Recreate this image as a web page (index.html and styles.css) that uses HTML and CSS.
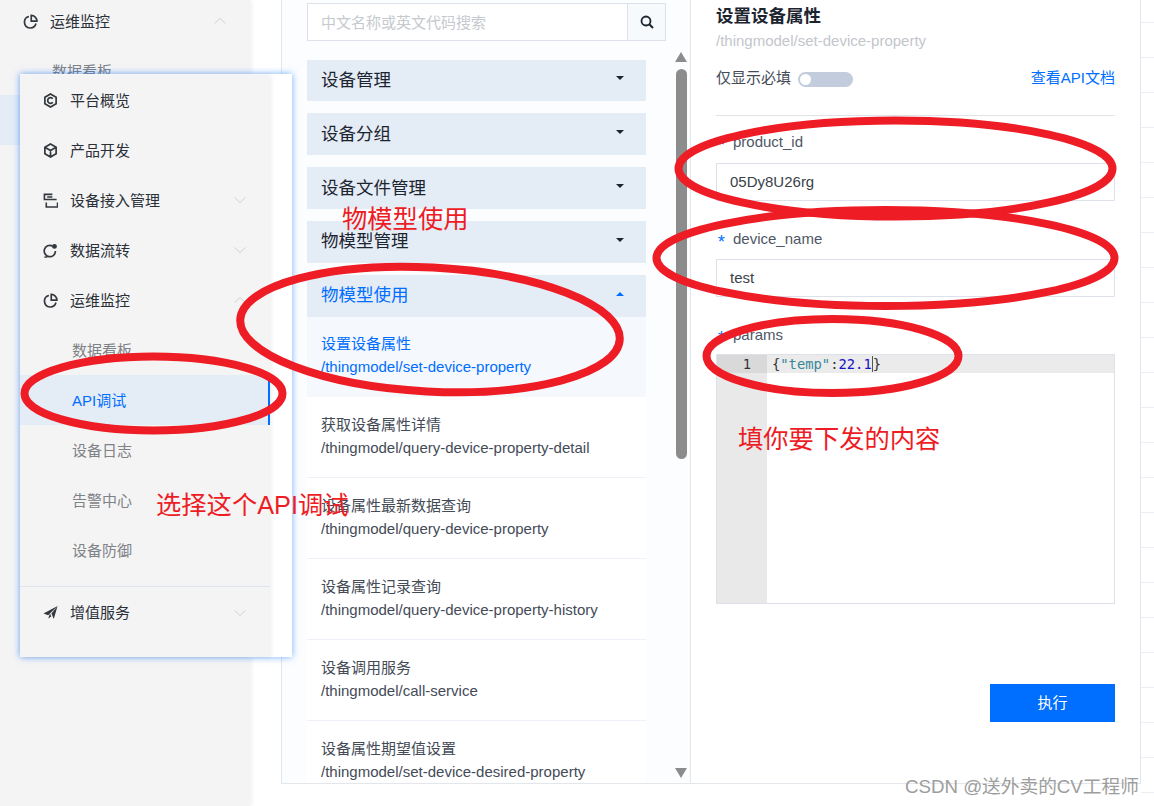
FILE: index.html
```html
<!DOCTYPE html>
<html lang="zh-CN">
<head>
    <meta charset="UTF-8">
    <meta name="viewport" content="width=device-width, initial-scale=1.0">
    <title>设置设备属性</title>
    <link rel="stylesheet" href="styles.css">
</head>
<body>
    <svg width="0" height="0" class="defs">
        <symbol id="i-overview" viewBox="0 0 16 16"><path d="M8 1l6 3.500v7L8 15l-6-3.500v-7z" fill="none" stroke="currentColor" stroke-width="1.800"/><path d="M10.400 6.200A3 3 0 1 0 10.400 9.800" fill="none" stroke="currentColor" stroke-width="1.800"/></symbol>
        <symbol id="i-product" viewBox="0 0 16 16"><path d="M8 1l6 3.500v7L8 15l-6-3.500v-7zM2 4.500L8 8l6-3.500M8 8v7" fill="none" stroke="currentColor" stroke-width="1.800"/></symbol>
        <symbol id="i-access" viewBox="0 0 16 16"><path d="M14.500 7H1.500V1.500H10" fill="none" stroke="currentColor" stroke-width="1.700"/><path d="M4.500 4.200h5.500M3.500 10v5h12v-5" fill="none" stroke="currentColor" stroke-width="1.700"/></symbol>
        <symbol id="i-flow" viewBox="0 0 16 16"><path d="M10 3.200A6 6 0 1 0 13.300 8.500" fill="none" stroke="currentColor" stroke-width="1.800"/><circle cx="12.200" cy="3.600" r="2.600" fill="currentColor"/><path d="M1.500 15h3" stroke="currentColor" stroke-width="1.500"/></symbol>
        <symbol id="i-ops" viewBox="0 0 16 16"><path d="M6.300 2.700A6.200 6.200 0 1 0 13.800 10.200" fill="none" stroke="currentColor" stroke-width="1.800"/><path d="M8.800 1.500v6h6A6 6 0 0 0 8.800 1.500z" fill="none" stroke="currentColor" stroke-width="1.800"/></symbol>
        <symbol id="i-value" viewBox="0 0 16 16"><path d="M15.500 1L.5 9l5 1.800zM15.500 1L9 9l2.500 6zM7.500 9L5.500 14.500 8.800 12.300z" fill="currentColor"/></symbol>
        <symbol id="i-chev" viewBox="0 0 14 8"><path d="M1.500 1.500L7 6.500l5.500-5" fill="none" stroke="currentColor" stroke-width="1"/></symbol>
    </svg>

    <aside class="side">
        <ul class="nav nav-back">
            <li class="nav-item"><svg class="nav-icon"><use href="#i-ops"/></svg>运维监控<svg class="chev up"><use href="#i-chev"/></svg></li>
            <li class="nav-sub">数据看板</li>
            <li class="nav-sub active">API调试</li>
            <li class="nav-sub">设备日志</li>
            <li class="nav-sub">告警中心</li>
            <li class="nav-sub">设备防御</li>
        </ul>
    </aside>

    <main class="main">
        <div class="panel">
            <section class="api-list">
                <div class="search">
                    <div class="search-input">中文名称或英文代码搜索</div>
                    <div class="search-btn">
                        <svg width="16" height="16" viewBox="0 0 16 16"><circle cx="7" cy="7" r="4.500" fill="none" stroke="#1c2430" stroke-width="1.800"/><path d="M10.300 10.300L14 14" stroke="#1c2430" stroke-width="2"/></svg>
                    </div>
                </div>
                <div class="list-scroll">
                    <div class="groups">
                        <div class="group">设备管理<span class="caret"></span></div>
                        <div class="group">设备分组<span class="caret"></span></div>
                        <div class="group">设备文件管理<span class="caret"></span></div>
                        <div class="group">物模型管理<span class="caret"></span></div>
                        <div class="group open">物模型使用<span class="caret"></span></div>
                    </div>
                    <ul class="apis">
                        <li class="api current"><p class="api-name">设置设备属性</p><p class="api-path">/thingmodel/set-device-property</p></li>
                        <li class="api"><p class="api-name">获取设备属性详情</p><p class="api-path">/thingmodel/query-device-property-detail</p></li>
                        <li class="api"><p class="api-name">设备属性最新数据查询</p><p class="api-path">/thingmodel/query-device-property</p></li>
                        <li class="api"><p class="api-name">设备属性记录查询</p><p class="api-path">/thingmodel/query-device-property-history</p></li>
                        <li class="api"><p class="api-name">设备调用服务</p><p class="api-path">/thingmodel/call-service</p></li>
                        <li class="api"><p class="api-name">设备属性期望值设置</p><p class="api-path">/thingmodel/set-device-desired-property</p></li>
                    </ul>
                </div>
                <div class="scrollbar">
                    <span class="arrow arrow-up"></span>
                    <span class="thumb"></span>
                    <span class="arrow arrow-down"></span>
                </div>
            </section>

            <section class="detail">
                <h2 class="title">设置设备属性</h2>
                <p class="subtitle">/thingmodel/set-device-property</p>
                <div class="options">
                    <span>仅显示必填</span>
                    <span class="toggle"><span class="knob"></span></span>
                    <a class="doc-link">查看API文档</a>
                </div>
                <div class="field first">
                    <label class="label"><span class="star">*</span>product_id</label>
                    <div class="input">05Dy8U26rg</div>
                </div>
                <div class="field">
                    <label class="label"><span class="star">*</span>device_name</label>
                    <div class="input">test</div>
                </div>
                <div class="field">
                    <label class="label"><span class="star">*</span>params</label>
                    <div class="editor">
                        <div class="gutter"><div class="line-no">1</div></div>
                        <div class="code"><div class="code-line">{<span class="tok-str">"temp"</span>:<span class="tok-num">22.1</span><span class="cursor"></span>}</div></div>
                    </div>
                </div>
                <div class="actions"><button class="run">执行</button></div>
            </section>
        </div>
        <div class="grid-strip"></div>
    </main>

    <!-- floating copy of the menu -->
    <div class="popup">
        <ul class="nav">
            <li class="nav-item"><svg class="nav-icon"><use href="#i-overview"/></svg>平台概览</li>
            <li class="nav-item"><svg class="nav-icon"><use href="#i-product"/></svg>产品开发</li>
            <li class="nav-item"><svg class="nav-icon"><use href="#i-access"/></svg>设备接入管理<svg class="chev"><use href="#i-chev"/></svg></li>
            <li class="nav-item"><svg class="nav-icon"><use href="#i-flow"/></svg>数据流转<svg class="chev"><use href="#i-chev"/></svg></li>
            <li class="nav-item"><svg class="nav-icon"><use href="#i-ops"/></svg>运维监控<svg class="chev up"><use href="#i-chev"/></svg></li>
            <li class="nav-sub">数据看板</li>
            <li class="nav-sub active">API调试</li>
            <li class="nav-sub">设备日志</li>
            <li class="nav-sub">告警中心</li>
            <li class="nav-sub">设备防御</li>
            <li class="nav-item last"><svg class="nav-icon"><use href="#i-value"/></svg>增值服务<svg class="chev"><use href="#i-chev"/></svg></li>
        </ul>
    </div>

    <!-- red marks drawn on top of the screenshot -->
    <svg class="marks" width="1154" height="806" viewBox="0 0 1154 806">
        <g fill="none" stroke="#ee1c25" stroke-width="8">
            <ellipse cx="895.500" cy="168.500" rx="217" ry="48"/>
            <ellipse cx="885.500" cy="258" rx="229" ry="48"/>
            <ellipse cx="832.500" cy="356" rx="126" ry="37"/>
            <ellipse cx="430" cy="329.500" rx="190" ry="62" transform="rotate(3 430 329.500)"/>
            <ellipse cx="153.500" cy="393.500" rx="129" ry="37"/>
        </g>
    </svg>
    <div class="note note-model">物模型使用</div>
    <div class="note note-api">选择这个API调试</div>
    <div class="note note-fill">填你要下发的内容</div>
    <div class="watermark">CSDN @送外卖的CV工程师</div>
</body>
</html>
```

FILE: styles.css
```css
* {
    box-sizing: border-box;
}

html, body {
    margin: 0;
    height: 806px;
    overflow: hidden;
}

body {
    display: flex;
    background: #fff;
    font-family: "Liberation Sans", "Noto Sans CJK SC", sans-serif;
    font-size: 15px;
    color: #1c2430;
}

p, ul, h2 {
    margin: 0;
    padding: 0;
}

ul {
    list-style: none;
}

.defs {
    position: absolute;
}

/* left menu */
.side {
    width: 250px;
    flex: none;
    background: #f4f4f4;
    box-shadow: 1px 0 5px rgba(0, 0, 0, .08);
    overflow: hidden;
}

.nav {
    width: 250px;
}

.nav-item, .nav-sub {
    display: flex;
    align-items: center;
    height: 50px;
    padding-bottom: 2px;
}

.nav-back {
    margin-top: -5px;
}

.nav-back .nav-item, .nav-back .nav-sub {
    padding-bottom: 0;
}

.nav-item {
    padding-left: 23px;
    color: #2a2f38;
}

.nav-icon {
    width: 15px;
    height: 15px;
    margin-top: 2px;
    margin-right: 12px;
    color: #33373e;
}

.nav-sub {
    padding-left: 52px;
    color: #7f8287;
}

.nav-sub.active {
    background: #e4ecf6;
    color: #006eff;
    box-shadow: inset -2px 0 0 #006eff;
}

.nav-item.last {
    margin-top: 11px;
    height: 52px;
    border-top: 1px solid #dfe5ef;
}

.chev {
    width: 14px;
    height: 8px;
    margin-top: 2px;
    margin-left: auto;
    margin-right: 23px;
    color: #cfd2d6;
}

.chev.up {
    transform: rotate(180deg);
}

.popup {
    position: absolute;
    left: 20px;
    top: 74px;
    width: 272px;
    height: 583px;
    padding-top: 1px;
    background: #fff;
    box-shadow: 0 0 7px rgba(0, 110, 255, .55);
}

.popup .nav {
    background: #f4f4f4;
    height: 582px;
    box-shadow: 1px 0 5px rgba(0, 0, 0, .08);
}

/* main area */
.main {
    flex: 1;
    display: flex;
    align-items: flex-start;
    padding-left: 31px;
}

.panel {
    width: 860px;
    height: 784px;
    flex: none;
    display: flex;
    border: 1px solid #e3e6ea;
    border-top: none;
    background: #fff;
}

.api-list {
    width: 409px;
    flex: none;
    position: relative;
    padding-left: 25px;
    border-right: 1px solid #e3e6ea;
    background: #fcfdff;
    overflow: hidden;
}

.search {
    display: flex;
    width: 359px;
    height: 38px;
    margin-top: 3px;
    border: 1px solid #dce1ea;
    background: #fff;
}

.search-input {
    flex: 1;
    padding-left: 13px;
    line-height: 37px;
    color: #c6c9ce;
}

.search-btn {
    width: 38px;
    display: flex;
    align-items: center;
    justify-content: center;
    background: #f7fafd;
    border-left: 1px solid #dce1ea;
}

.list-scroll {
    width: 339px;
    margin-top: 18.600px;
}

.groups {
    display: flex;
    flex-direction: column;
    gap: 12px;
}

.group {
    display: flex;
    align-items: center;
    justify-content: space-between;
    height: 41.800px;
    padding: 0 22px 4px 14px;
    background: #e4ecf6;
    font-size: 17.500px;
    color: #1c2430;
}

.group.open {
    color: #006eff;
}

.caret {
    width: 0;
    height: 0;
    border-left: 4.500px solid transparent;
    border-right: 4.500px solid transparent;
    border-top: 4.500px solid #1c2430;
}

.group.open .caret {
    border-top: none;
    border-bottom: 4.500px solid #006eff;
}

.api {
    height: 81px;
    padding: 16px 14px 0;
    background: #fff;
    border-bottom: 1px solid #eff3f9;
}

.api.current {
    height: 80.500px;
    padding-top: 15px;
    background: #f5f8fc;
    border-bottom: none;
}

.api-name {
    line-height: 23px;
    color: #444b57;
}

.api-path {
    line-height: 24px;
    color: #444b57;
}

.api.current .api-name, .api.current .api-path {
    color: #006eff;
}

.scrollbar {
    position: absolute;
    left: 393px;
    top: 52px;
    width: 12px;
    height: 726px;
    display: flex;
    flex-direction: column;
    align-items: center;
}

.thumb {
    width: 11px;
    height: 390px;
    margin: 7px 0 309px;
    border-radius: 6px;
    background: #8c8c8c;
}

.arrow {
    width: 0;
    height: 0;
    border-left: 6px solid transparent;
    border-right: 6px solid transparent;
}

.arrow-up {
    border-bottom: 10px solid #8c8c8c;
}

.arrow-down {
    border-top: 10px solid #8c8c8c;
}

/* request form */
.detail {
    flex: 1;
    padding: 0 25px;
}

.title {
    font-size: 17.500px;
    line-height: 24px;
    margin-top: 4px;
    font-weight: 700;
    color: #1c2430;
}

.subtitle {
    margin-top: 1px;
    line-height: 24px;
    color: #c3c6cc;
}

.options {
    display: flex;
    align-items: center;
    margin-top: 10px;
    height: 26px;
    color: #444b57;
}

.toggle {
    width: 55px;
    height: 15px;
    margin-left: 7px;
    margin-top: 7px;
    padding: 2px;
    border-radius: 8px;
    background: #c3ccdc;
}

.knob {
    display: block;
    width: 11px;
    height: 11px;
    border-radius: 50%;
    background: #fff;
}

.doc-link {
    margin-left: auto;
    color: #006eff;
}

.field {
    margin-top: 27px;
}

.field.first {
    margin-top: 26px;
    padding-top: 15px;
    border-top: 1px solid #dfe3e8;
}

.label {
    display: block;
    height: 22px;
    line-height: 22px;
    color: #4e5765;
}

.star {
    display: inline-block;
    width: 17px;
    font-family: "Liberation Mono", monospace;
    font-size: 18px;
    line-height: 1;
    vertical-align: -4px;
    color: #006eff;
}

.input {
    height: 38px;
    margin-top: 9px;
    padding-left: 13px;
    line-height: 36px;
    color: #3a3f47;
    border: 1px solid #dce1ea;
}

.field.first .input {
    margin-top: 10px;
}

.editor {
    display: flex;
    height: 250px;
    margin-top: 8px;
    border: 1px solid #dce1ea;
    font-family: "DejaVu Sans Mono", monospace;
    font-size: 13.800px;
}

.gutter {
    width: 50px;
    flex: none;
    background: #e9e9e9;
    color: #333;
}

.line-no {
    height: 18px;
    line-height: 18px;
    padding-right: 16px;
    text-align: right;
    background: #d9d9d9;
}

.code {
    flex: 1;
}

.code-line {
    height: 18px;
    line-height: 18px;
    padding-left: 5px;
    background: #ebebeb;
    color: #333;
}

.tok-str {
    color: #37879a;
}

.tok-num {
    color: #1515c8;
}

.cursor {
    display: inline-block;
    width: 1px;
    height: 16px;
    vertical-align: -3px;
    background: #555;
}

.actions {
    display: flex;
    justify-content: flex-end;
    margin-top: 80px;
}

.run {
    width: 125px;
    height: 38px;
    padding: 0 0 4px;
    border: none;
    background: #006eff;
    color: #fff;
    font: inherit;
}

.grid-strip {
    flex: 1;
    height: 806px;
    background-image: linear-gradient(to bottom, transparent 22px, #eaeff6 22px, #eaeff6 23px, transparent 23px);
    background-size: 100% 35px;
}

/* annotations */
.marks {
    position: absolute;
    left: 0;
    top: 0;
    pointer-events: none;
}

.note {
    position: absolute;
    font-size: 25.300px;
    line-height: 32px;
    color: #ee1c25;
    white-space: nowrap;
}

.note-model {
    left: 342px;
    top: 203px;
}

.note-api {
    left: 156px;
    top: 489px;
}

.note-fill {
    left: 738px;
    top: 423px;
}

.watermark {
    position: absolute;
    left: 905px;
    top: 775px;
    font-size: 18.700px;
    line-height: 24px;
    color: #9d9d9d;
    white-space: nowrap;
}
```
